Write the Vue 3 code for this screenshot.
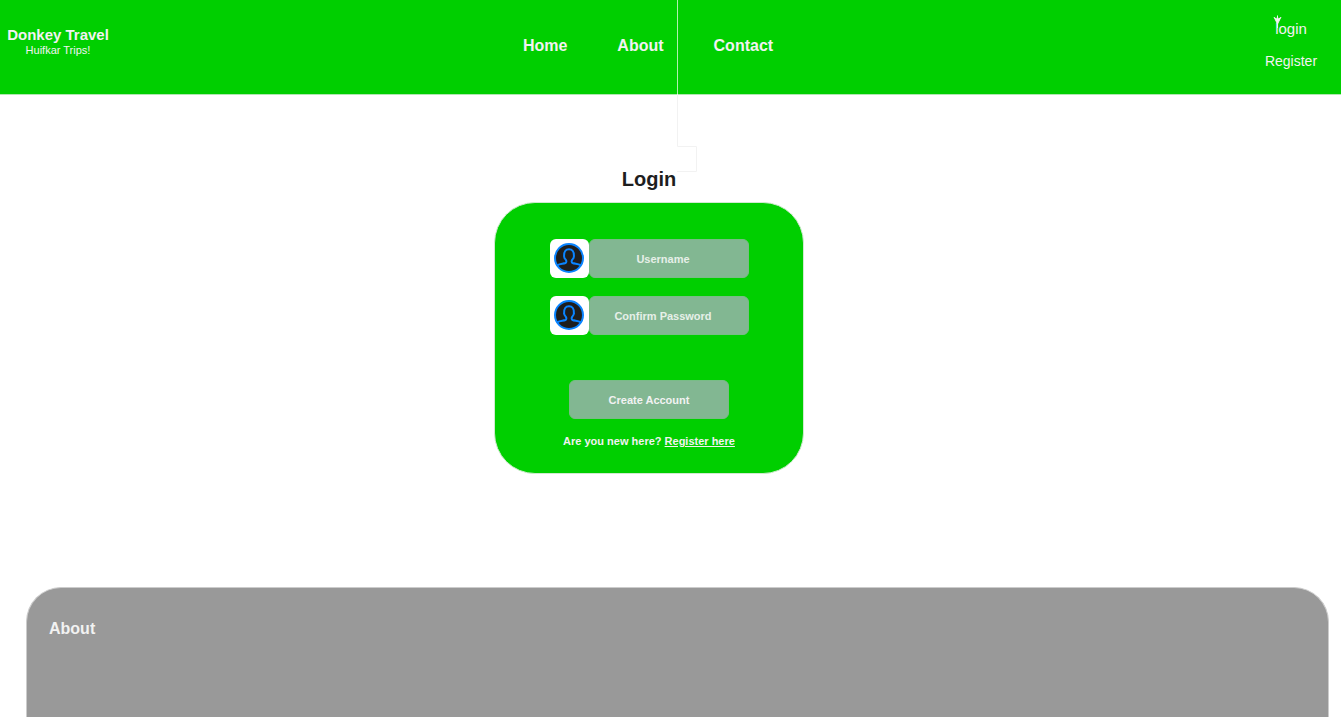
<script setup>
import { ref } from 'vue'

const links = ['Home', 'About', 'Contact']
const fields = [
  { id: 'username', label: 'Username', type: 'text' },
  { id: 'password', label: 'Confirm Password', type: 'password' },
]
const values = ref({ username: '', password: '' })
</script>

<template>
  <div class="page">
    <header class="topbar">
      <div class="brand">
        <strong class="brand-name">Donkey Travel</strong>
        <span class="brand-tag">Huifkar Trips!</span>
      </div>
      <nav class="nav">
        <a v-for="link in links" :key="link" href="#">{{ link }}</a>
      </nav>
      <div class="account">
        <a class="login-link" href="#">login
          <svg class="arrow" width="9" height="13" viewBox="0 0 9 13" aria-hidden="true">
            <path d="M4.5 0.5V13M1 2L4.5 9L8 2" />
            <path class="arrow-head" d="M1 2L3.5 3.5L4.5 0.5L5.5 3.5L8 2L4.5 9Z" />
          </svg>
        </a>
        <a class="register-link" href="#">Register</a>
      </div>
    </header>

    <svg class="connector" width="22" height="174" viewBox="0 0 22 174" aria-hidden="true">
      <path class="over-bar" d="M1.5 0V94" />
      <path d="M1.5 94V146.5H20.5V171.5H1" />
    </svg>

    <main class="main">
      <h1>Login</h1>
      <form class="card" @submit.prevent>
        <div v-for="field in fields" :key="field.id" class="field">
          <label class="avatar" :for="field.id" :aria-label="field.label">
            <svg width="32" height="32" viewBox="0 0 32 32" aria-hidden="true">
              <circle cx="16" cy="16" r="14" fill="#1e1e1e" stroke="#0a84ff" stroke-width="2" />
              <path
                d="M4.5 23.2C7 21.8 10.3 21.9 12.4 21C13.7 20.3 13.6 18.8 12.7 17.6C11.7 16.6 11 15.3 11.1 14.2C10.9 9.5 12.6 7.3 16 7.3C19.4 7.3 21.1 9.5 20.9 14.2C21 15.3 20.3 16.6 19.3 17.6C18.4 18.8 18.3 20.3 19.6 21C21.7 21.9 25 21.8 27.5 23.2"
                fill="none" stroke="#0a84ff" stroke-width="2"
              />
            </svg>
          </label>
          <input :id="field.id" v-model="values[field.id]" :type="field.type" :placeholder="field.label">
        </div>
        <button type="submit">Create Account</button>
        <p class="signup">Are you new here? <a href="#">Register here</a></p>
      </form>
    </main>

    <section class="about">
      <h2>About</h2>
    </section>
  </div>
</template>

<style>
body {
  margin: 0;
  background: #fff;
}
</style>

<style scoped>
.page {
  position: relative;
  display: flex;
  flex-direction: column;
  min-height: 100vh;
  font-family: Arial, "Liberation Sans", sans-serif;
  color: #f2f2f2;
}

.page * {
  box-sizing: border-box;
}

a {
  color: inherit;
  text-decoration: none;
}

.topbar {
  display: flex;
  height: 95px;
  background: #00cf00;
  border-bottom: 1px solid #b0e8b0;
}

.brand {
  display: flex;
  flex-direction: column;
  align-items: center;
  width: 116px;
  padding-top: 26px;
}

.brand-name {
  font-size: 15px;
  line-height: 18px;
}

.brand-tag {
  font-size: 11px;
  line-height: 13px;
}

.nav {
  flex: 1;
  display: flex;
  justify-content: center;
  gap: 50px;
  padding-top: 37px;
  font-size: 16px;
  font-weight: bold;
  line-height: 18px;
}

.account {
  display: flex;
  flex-direction: column;
  align-items: center;
  gap: 14px;
  width: 161px;
  padding: 20px 0 0 61px;
  font-size: 15px;
  line-height: 18px;
}

.login-link {
  position: relative;
}

.register-link {
  font-size: 14px;
}

.arrow {
  position: absolute;
  left: -2px;
  top: -5px;
  fill: none;
  stroke: #f2f2f2;
}

.arrow .arrow-head {
  fill: #f2f2f2;
  stroke: none;
}

.connector {
  position: absolute;
  left: calc(50% + 5px);
  top: 0;
  fill: none;
  stroke: #f2f2f2;
  pointer-events: none;
}

.connector .over-bar {
  stroke: #b0f0b0;
}

.main {
  display: flex;
  flex-direction: column;
  align-items: center;
  padding: 72px 43px 113px 0;
}

h1 {
  margin: 0 0 11px;
  font-size: 20px;
  line-height: 24px;
  color: #1e1e1e;
}

.card {
  display: flex;
  flex-direction: column;
  align-items: center;
  width: 310px;
  padding: 36px 0 25px;
  background: #00cf00;
  border: 1px solid #d0ead0;
  border-radius: 41px;
  font-size: 11px;
  font-weight: bold;
}

.field {
  display: flex;
  margin-bottom: 18px;
}

.avatar {
  display: flex;
  justify-content: center;
  width: 39px;
  height: 39px;
  padding-top: 3px;
  background: #fff;
  border-radius: 6px;
}

input,
button {
  width: 160px;
  height: 39px;
  margin: 0;
  padding: 0;
  border: 1px solid #78bd86;
  border-radius: 6px;
  background: #82b792;
  color: #f2f2f2;
  font: inherit;
  text-align: center;
}

input {
  padding-right: 11px;
}

input::placeholder {
  color: #e6efe8;
  opacity: 1;
}

button {
  margin-top: 27px;
}

.signup {
  margin: 16px 0 0;
  line-height: 13px;
}

.signup a {
  text-decoration: underline;
}

.about {
  flex: 1;
  margin: 0 12px 0 26px;
  padding: 32px 22px;
  background: #999;
  border: 1px solid #ccc;
  border-bottom: 0;
  border-radius: 35px 35px 0 0;
}

h2 {
  margin: 0;
  font-size: 16px;
  line-height: 18px;
}
</style>
